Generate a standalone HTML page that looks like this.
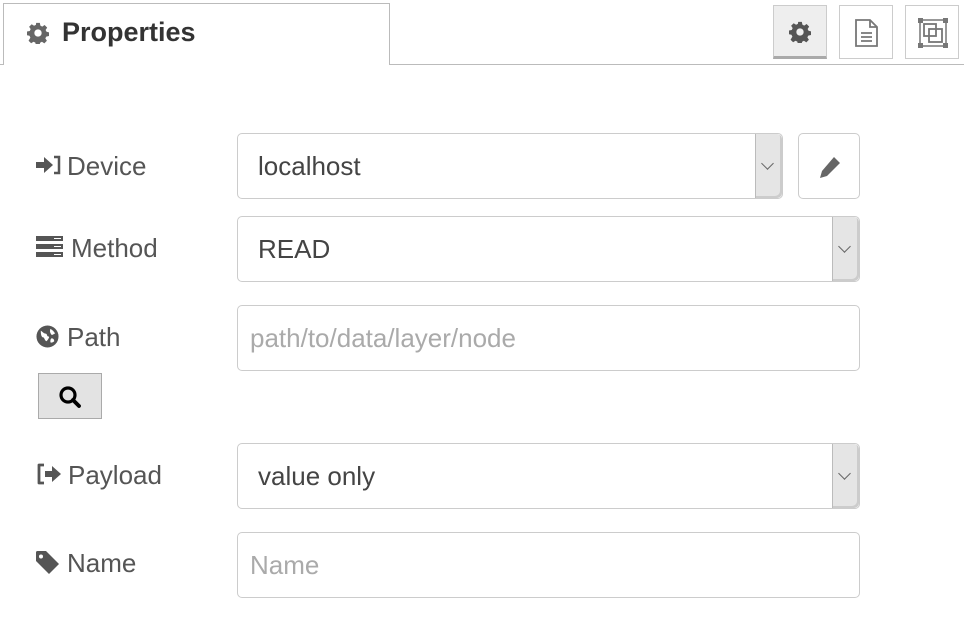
<!DOCTYPE html><html><head><style>
body{margin:0;width:964px;height:631px;background:#fff;font-family:"Liberation Sans",sans-serif;position:relative;overflow:hidden;color:#444}
.a{position:absolute;box-sizing:border-box}
.lbl{font-size:26px;color:#555;line-height:30px}
.box{border:1px solid #ccc;border-radius:5px;background:#fff;font-size:26px;line-height:65px;padding-left:20px;color:#444}
.arr{position:absolute;top:0;right:0;width:26px;height:100%;background:#e5e5e5;border-left:1px solid #bbb;border-radius:0 5px 5px 0;box-shadow:inset -2px -2px 0 #ccc}
.arr:after{content:"";position:absolute;left:7px;top:25px;width:8px;height:8px;border-right:1.5px solid #666;border-bottom:1.5px solid #666;transform:rotate(45deg)}
.ph{color:#aaa;padding-left:12px}
.tb{border:1px solid #ccc;background:#fff;width:54px;height:54px;top:5px}
</style></head><body>
<div class="a" style="left:0;top:64px;width:964px;height:1px;background:#bbb"></div>
<div class="a" style="left:3px;top:3px;width:387px;height:62px;border:1px solid #bbb;border-bottom:none;background:#fff"></div>
<svg class="a" style="left:27px;top:22px" width="22" height="22" viewBox="0 0 24 24"><path fill="#666" d="M10 1h4l.6 3 2 1 2.6-1.7 2.8 2.8L20.3 8.7l1 2 2.7.6v4l-3 .6-1 2 1.7 2.6-2.8 2.8-2.6-1.7-2 1-.6 2.9h-4l-.6-3-2-1-2.6 1.7-2.8-2.8L3.7 17l-1-2L0 14.4v-4l3-.6 1-2L2.3 5.2 5.1 2.4l2.6 1.7 2-1zM12 8a4 4 0 100 8 4 4 0 000-8z"/></svg>
<div class="a" style="left:62px;top:17px;font-size:27px;font-weight:bold;color:#333">Properties</div>
<div class="a tb" style="left:773px;background:#eee;border-bottom:3px solid #aaa"><svg style="position:absolute;left:15px;top:15px" width="22" height="22" viewBox="0 0 24 24"><path fill="#555" d="M10 1h4l.6 3 2 1 2.6-1.7 2.8 2.8L20.3 8.7l1 2 2.7.6v4l-3 .6-1 2 1.7 2.6-2.8 2.8-2.6-1.7-2 1-.6 2.9h-4l-.6-3-2-1-2.6 1.7-2.8-2.8L3.7 17l-1-2L0 14.4v-4l3-.6 1-2L2.3 5.2 5.1 2.4l2.6 1.7 2-1zM12 8a4 4 0 100 8 4 4 0 000-8z"/></svg></div>
<div class="a tb" style="left:839px"><svg style="position:absolute;left:13px;top:12px" width="28" height="30" viewBox="0 0 28 30"><path d="M3 2h14l7 7v19H3z M17 2v7h7" fill="none" stroke="#777" stroke-width="1.8"/><path d="M8 15h11M8 19h11M8 23h11" stroke="#777" stroke-width="1.8"/></svg></div>
<div class="a tb" style="left:905px"><svg style="position:absolute;left:11px;top:11px" width="32" height="32" viewBox="0 0 32 32"><rect x="3" y="3" width="26" height="26" fill="none" stroke="#777" stroke-width="1.5"/><rect x="7" y="7" width="12" height="12" fill="none" stroke="#777" stroke-width="1.8"/><rect x="12" y="12" width="13" height="13" fill="none" stroke="#777" stroke-width="1.8"/><g fill="#777"><rect x="1" y="1" width="5" height="5"/><rect x="26" y="1" width="5" height="5"/><rect x="1" y="26" width="5" height="5"/><rect x="26" y="26" width="5" height="5"/></g></svg></div>

<svg class="a" style="left:36px;top:155px" width="26" height="20" viewBox="0 0 26 20"><path fill="#555" d="M0 7h8V2l9 8-9 8v-5H0z"/><path d="M18 2h5v16h-5" fill="none" stroke="#555" stroke-width="2.5"/></svg>
<div class="a lbl" style="left:67px;top:151px">Device</div>
<svg class="a" style="left:36px;top:236px" width="27" height="21" viewBox="0 0 27 21"><g fill="#555"><rect y="0" width="27" height="5"/><rect y="8" width="27" height="5"/><rect y="16" width="27" height="5"/></g><g fill="#fff"><rect x="18" y="2" width="7" height="1"/><rect x="18" y="10" width="7" height="1"/><rect x="18" y="18" width="7" height="1"/></g></svg>
<div class="a lbl" style="left:71px;top:233px">Method</div>
<svg class="a" style="left:36px;top:325px" width="23" height="23" viewBox="0 0 24 24"><circle cx="12" cy="12" r="11.5" fill="#555"/><path fill="#fff" d="M5 6c2 1 3 3 5 3s1 3 3 3-1 4-2 5c-2-1-2-3-3-4-2 0-3-2-3-7zM15 4c2 1 4 3 5 5-2 0-2 2-4 1-1-2-2-3-1-6zM16 14c2 0 3 1 3 3-1 1-3 2-4 1 0-2 0-3 1-4z"/></svg>
<div class="a lbl" style="left:67px;top:322px">Path</div>
<div class="a" style="left:38px;top:373px;width:64px;height:46px;background:#e3e3e3;border:1px solid #aaa"><svg style="position:absolute;left:19px;top:11px" width="25" height="25" viewBox="0 0 25 25"><circle cx="10" cy="10" r="7" fill="none" stroke="#000" stroke-width="3.2"/><path d="M15 15l6 6" stroke="#000" stroke-width="3.8" stroke-linecap="round"/></svg></div>
<svg class="a" style="left:36px;top:463px" width="26" height="22" viewBox="0 0 26 22"><path d="M8 2H3v18h5" fill="none" stroke="#555" stroke-width="2.8" stroke-linejoin="round"/><path fill="#555" d="M9 8h7V3l9 8-9 8v-5H9z"/></svg>
<div class="a lbl" style="left:68px;top:460px">Payload</div>
<svg class="a" style="left:36px;top:551px" width="24" height="24" viewBox="0 0 24 24"><path fill="#555" d="M0 1.5A1.5 1.5 0 011.5 0H10l13 13-10 10L0 10zM5 3.5a2 2 0 100 4 2 2 0 000-4z"/></svg>
<div class="a lbl" style="left:67px;top:548px">Name</div>

<div class="a box" style="left:237px;top:133px;width:546px;height:66px">localhost<div class="arr"></div></div>
<div class="a" style="left:798px;top:133px;width:62px;height:66px;border:1px solid #ccc;border-radius:5px"><svg style="position:absolute;left:20px;top:22px" width="22" height="22" viewBox="0 0 22 22"><path fill="#666" d="M15 1l6 6L8 20l-7 2 2-7zM3 16l3 3" /></svg></div>
<div class="a box" style="left:237px;top:216px;width:623px;height:66px">READ<div class="arr"></div></div>
<div class="a box ph" style="left:237px;top:305px;width:623px;height:66px">path/to/data/layer/node</div>
<div class="a box" style="left:237px;top:443px;width:623px;height:66px">value only<div class="arr"></div></div>
<div class="a box ph" style="left:237px;top:532px;width:623px;height:66px">Name</div>
</body></html>
